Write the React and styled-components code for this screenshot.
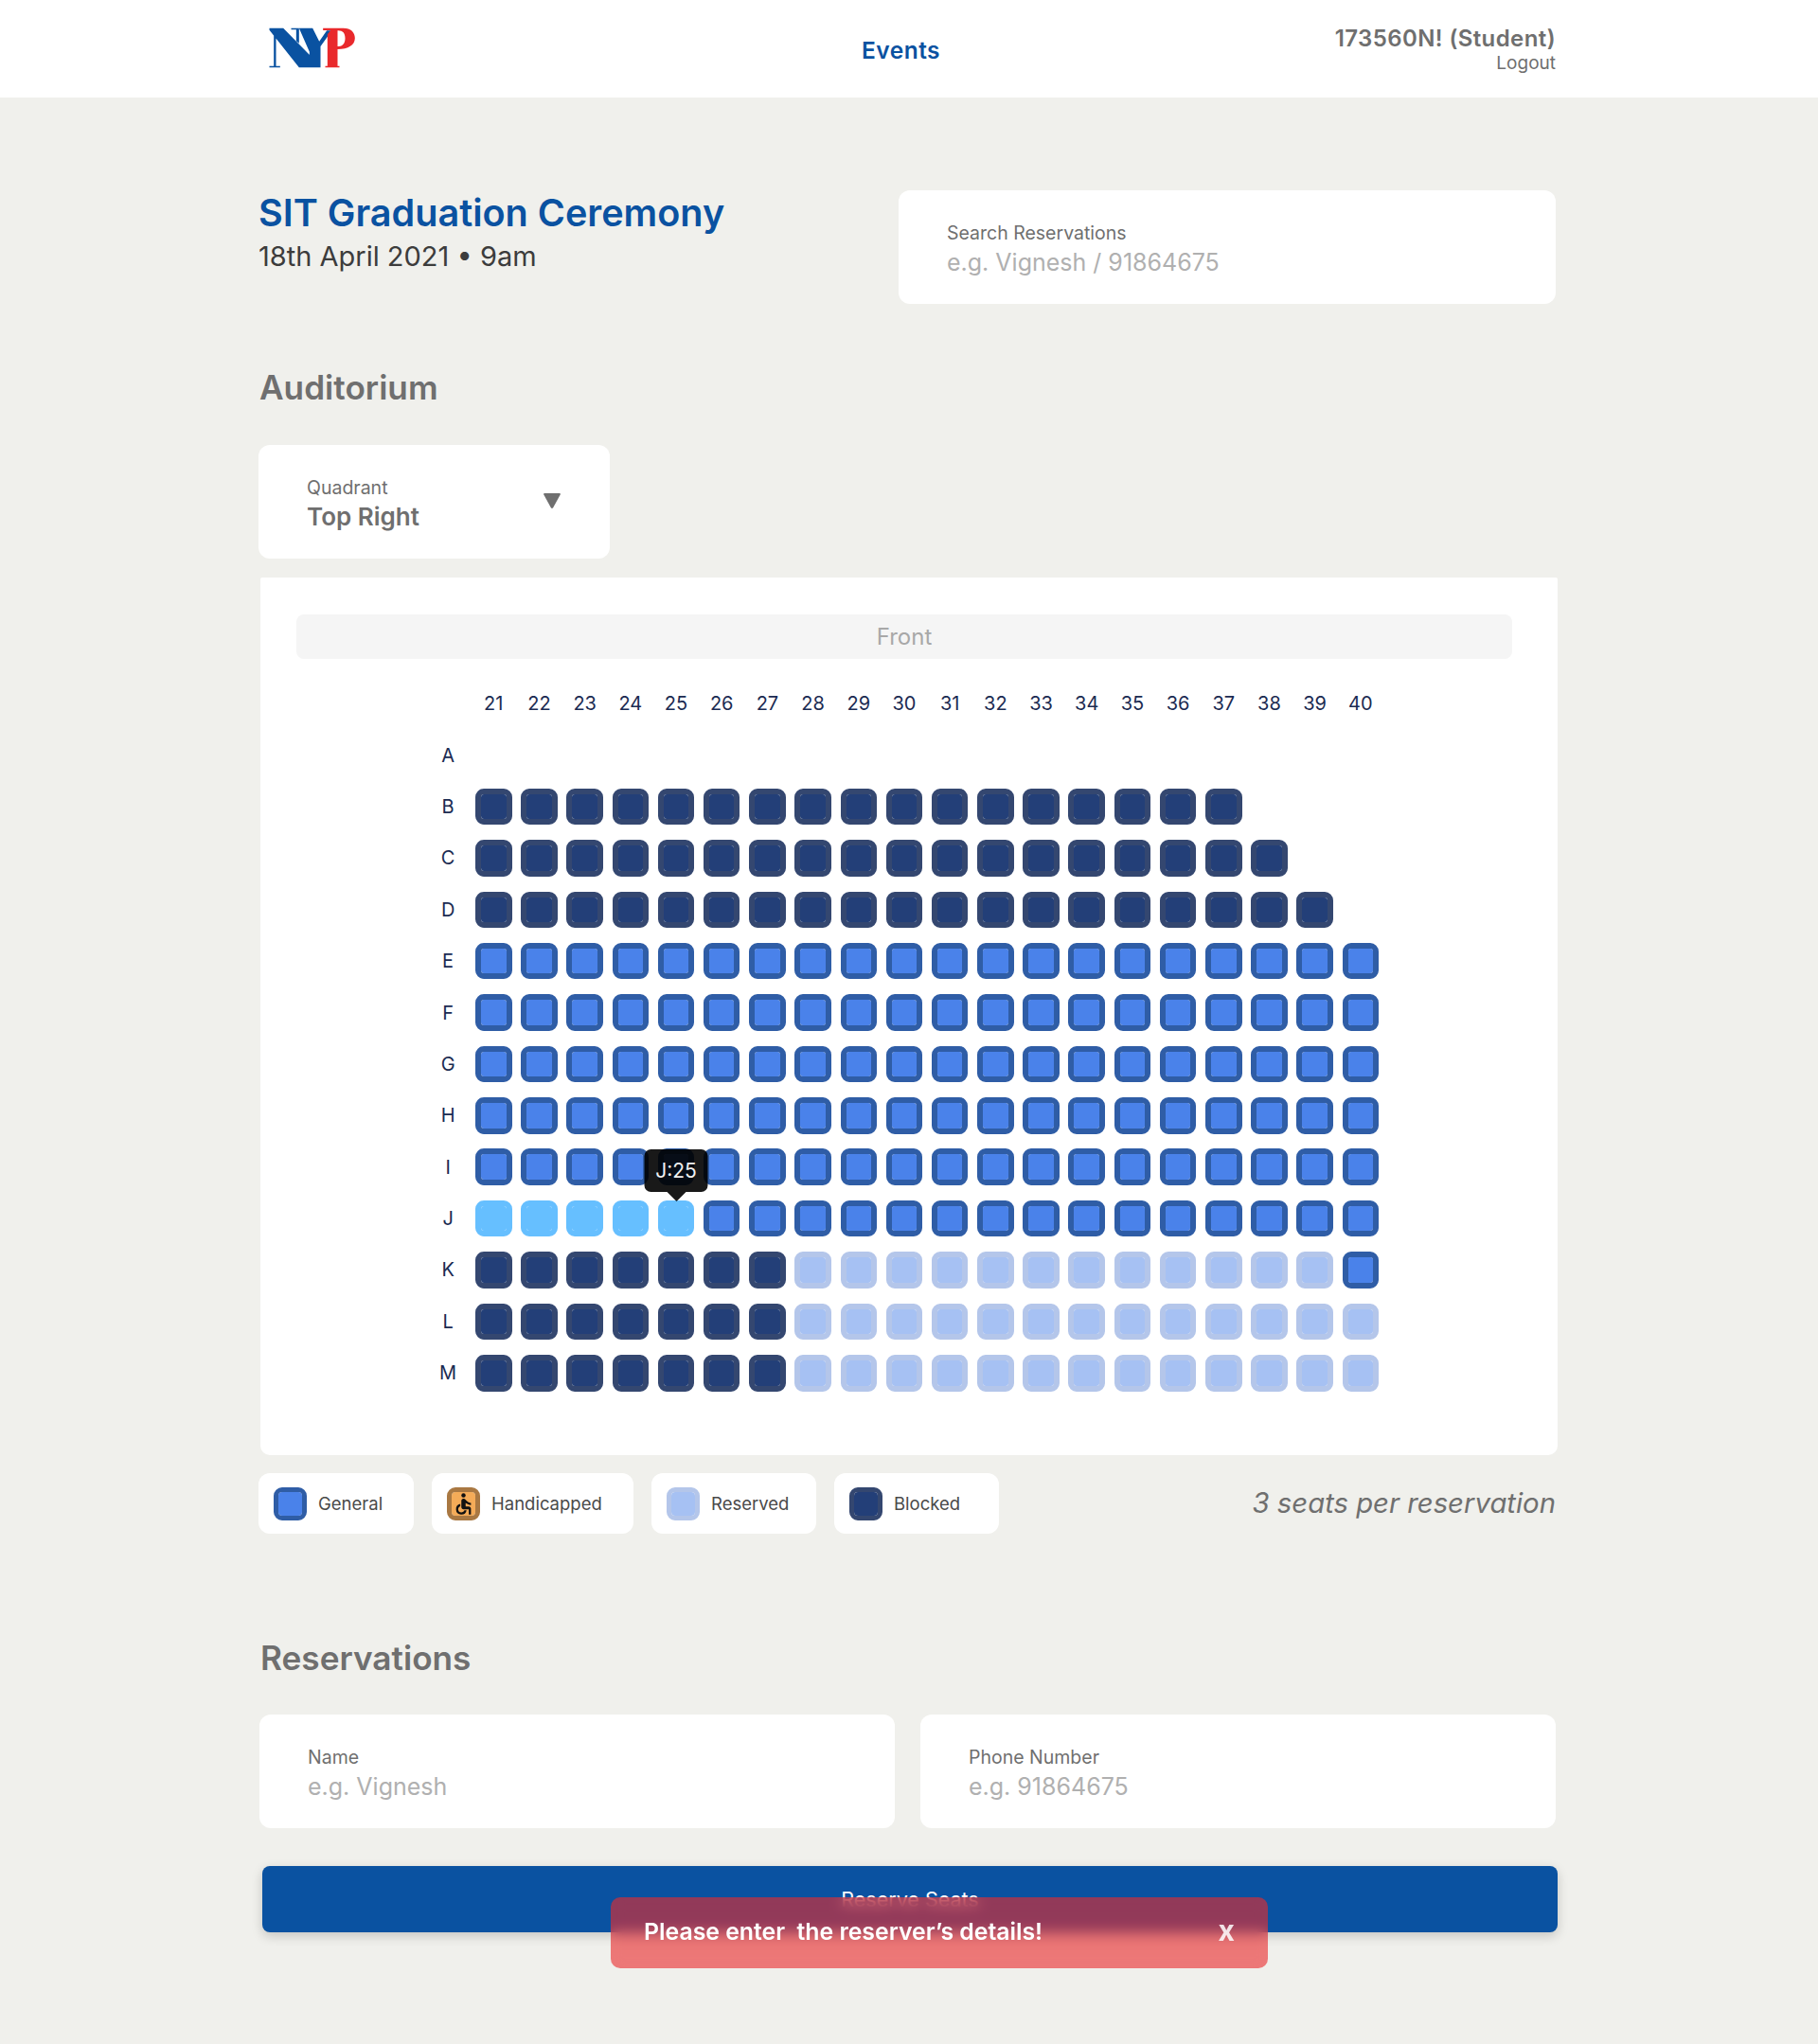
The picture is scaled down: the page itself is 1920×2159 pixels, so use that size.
import React from "react";
import styled, { createGlobalStyle } from "styled-components";
import { MdAccessible } from "react-icons/md";

const Global = createGlobalStyle`
  html, body { margin: 0; padding: 0; background: #f0f0ec; }
  body { font-family: Inter, "Open Sans", "Liberation Sans", sans-serif; }
  * { box-sizing: border-box; }
`;

const Page = styled.div`
  position: relative;
  width: 1920px;
  height: 2159px;
  background: #f0f0ec;
  overflow: hidden;
`;

const Header = styled.header`
  height: 103px;
  background: #fff;
  padding: 0 277px 0 284px;
  display: grid;
  grid-template-columns: 1fr auto 1fr;
  align-items: center;
`;

const Logo = styled.svg`
  width: 92px;
  height: 44px;
  display: block;
  margin-top: -2px;
`;

const NavLink = styled.a`
  color: #0a52a1;
  font-size: 24.5px;
  letter-spacing: 0.5px;
  font-weight: 600;
  margin: 3px 24px 0 0;
`;

const User = styled.div`
  justify-self: end;
  text-align: right;
  color: #6f6f6f;
  margin-top: 1px;
`;

const UserName = styled.div`
  font-size: 24px;
  letter-spacing: 0.4px;
  font-weight: 600;
  line-height: 29px;
`;

const Logout = styled.div`
  font-size: 19px;
  line-height: 24px;
`;

const Main = styled.main`
  width: 1372px;
  margin-left: 273px;
`;

const TopRow = styled.section`
  margin-top: 98px;
  display: flex;
  justify-content: space-between;
  padding-right: 2px;
`;

const Title = styled.h1`
  margin: 0;
  font-size: 39.6px;
  line-height: 48px;
  font-weight: 600;
  color: #0a52a1;
`;

const DateLine = styled.div`
  margin-top: 2px;
  font-size: 29px;
  line-height: 40px;
  color: #3c3c3c;
`;

const Card = styled.div`
  width: ${(p) => p.$width}px;
  height: 120px;
  background: #fff;
  border-radius: 12px;
  padding: 33px 0 0 51px;
`;

const FieldLabel = styled.div`
  font-size: 19.5px;
  line-height: 24px;
  color: #6f6f6f;
`;

const Placeholder = styled.div`
  font-size: 25px;
  line-height: 32px;
  margin-top: 3px;
  color: #b0b0b0;
`;

const SectionTitle = styled.h2`
  margin: ${(p) => p.$top}px 0 0 ${(p) => p.$left}px;
  font-size: 35.2px;
  line-height: 44px;
  font-weight: 600;
  color: #6f6f6f;
`;

const SelectCard = styled(Card)`
  margin-top: 39px;
  display: flex;
  justify-content: space-between;
  padding: 33px 51px 0 51px;
`;

const SelectValue = styled.div`
  font-size: 26px;
  line-height: 32px;
  margin-top: 3px;
  font-weight: 600;
  color: #6f6f6f;
`;

const Caret = styled.svg`
  width: 20px;
  height: 18px;
  margin-top: 17px;
  fill: #6f6f6f;
`;

const Panel = styled.section`
  margin: 20px 0 0 2px;
  width: 1370px;
  height: 927px;
  background: #fff;
  border-radius: 2px 2px 10px 10px;
  padding: 39px 48px 0 38px;
`;

const Front = styled.div`
  height: 47px;
  line-height: 47px;
  border-radius: 8px;
  background: #f5f5f5;
  text-align: center;
  font-size: 24px;
  color: #a8a8a8;
`;

const SeatGrid = styled.div`
  margin: 20px 0 0 136px;
  display: grid;
  grid-template-columns: repeat(21, 48.2px);
  grid-auto-rows: 54.4px;
  color: #1b2b52;
  font-size: 20px;
`;

const Label = styled.div`
  display: flex;
  align-items: center;
  justify-content: center;
`;

const SeatCell = styled.div`
  display: flex;
  align-items: center;
  justify-content: center;
`;

const seatColors = {
  general: ["#4a82ea", "#2f5da6"],
  blocked: ["#233f78", "#344770"],
  reserved: ["#a6c1f3", "#b4c6ea"],
  selected: ["#66bfff", "#66bfff"],
  handicapped: ["#f4ab58", "#a97842"],
};

const Seat = styled.div`
  position: relative;
  width: 38.5px;
  height: 38.5px;
  border-radius: 9px;
  background: ${(p) => seatColors[p.$kind][0]};
  background-clip: padding-box;
  border: 6px solid ${(p) => seatColors[p.$kind][1]};
`;

const Tooltip = styled.div`
  position: absolute;
  left: 50%;
  bottom: 100%;
  z-index: 2;
  margin: 0 0 15px;
  transform: translateX(-50%);
  width: 67px;
  height: 45px;
  border-radius: 7px;
  background: rgba(0, 0, 0, 0.9);
  color: #f0f0f0;
  font-size: 21px;
  line-height: 45px;
  text-align: center;
  &::after {
    content: "";
    position: absolute;
    left: 50%;
    top: 100%;
    margin-left: -10px;
    border: 10px solid transparent;
    border-bottom: 0;
    border-top-color: rgba(0, 0, 0, 0.9);
  }
`;

const LegendRow = styled.div`
  margin-top: 19px;
  display: flex;
  align-items: center;
  gap: 19px;
  padding-right: 2px;
`;

const LegendItem = styled.div`
  width: ${(p) => p.$width}px;
  height: 64px;
  background: #fff;
  border-radius: 12px;
  display: flex;
  align-items: center;
  gap: 12px;
  padding-left: 16px;
  font-size: 18.5px;
  color: #4a4a4a;
`;

const LegendSeat = styled(Seat)`
  width: 35px;
  height: 35px;
  flex: none;
  border-width: 5px;
  display: flex;
  align-items: center;
  justify-content: center;
  color: #111;
  & > svg { width: 27px; height: 27px; flex: none; }
`;

const Note = styled.div`
  margin: 0 0 2px auto;
  font-size: 29.3px;
  font-style: italic;
  color: #6f6f6f;
`;

const Fields = styled.div`
  margin: 38px 0 0 1px;
  display: flex;
  justify-content: space-between;
  padding-right: 2px;
`;

const Submit = styled.button`
  display: block;
  margin: 40px 0 0 4px;
  width: 1368px;
  height: 70px;
  padding: 0;
  border: 0;
  border-radius: 8px;
  background: #0a52a1;
  color: #fff;
  font: 21.5px Inter, sans-serif;
  box-shadow: 0 4px 12px rgba(0, 0, 0, 0.18);
`;

const Toast = styled.div`
  position: absolute;
  left: 645px;
  top: 2004px;
  width: 694px;
  height: 75px;
  border-radius: 10px;
  background: rgba(233, 42, 44, 0.61);
  backdrop-filter: blur(7px);
  display: flex;
  align-items: center;
  justify-content: space-between;
  padding: 0 35px 3px 35px;
  color: #fff;
  font-size: 24.8px;
  font-weight: 600;
`;

const ToastClose = styled.span`
  margin-bottom: 3px;
  font-size: 30px;
  font-weight: 700;
  opacity: 0.85;
`;

const columns = Array.from({ length: 20 }, (_, i) => 21 + i);

const rows = [
  ["A", []],
  ["B", [["blocked", 17]]],
  ["C", [["blocked", 18]]],
  ["D", [["blocked", 19]]],
  ["E", [["general", 20]]],
  ["F", [["general", 20]]],
  ["G", [["general", 20]]],
  ["H", [["general", 20]]],
  ["I", [["general", 20]]],
  ["J", [["selected", 5], ["general", 15]]],
  ["K", [["blocked", 7], ["reserved", 12], ["general", 1]]],
  ["L", [["blocked", 7], ["reserved", 13]]],
  ["M", [["blocked", 7], ["reserved", 13]]],
];

const expand = (spec) => spec.flatMap(([kind, n]) => Array(n).fill(kind));

const NypLogo = () => (
  <Logo viewBox="27 28 275 132" aria-label="NYP">
    <path
      fill="#0a52a1"
      d="M42 35H49V150H62V155H28V150H42Z M28 30H72L190 150V155H122L28 36Z M113 35H97V30H122V78L113 71Z M122 30H165L186 72L210 38H226L190 88V155H155V105Z"
    />
    <path
      fill="#e9292c"
      fillRule="evenodd"
      d="M198 30H262C287 30 299 44 299 62C299 84 278 97 244 97V150H250V155H205V150H212V50L222 37H198ZM244 38V88C262 90 268 76 268 62C268 46 260 37 244 38Z"
    />
  </Logo>
);

export default function App() {
  return (
    <Page>
      <Global />
      <Header>
        <NypLogo />
        <NavLink>Events</NavLink>
        <User>
          <UserName>173560N! (Student)</UserName>
          <Logout>Logout</Logout>
        </User>
      </Header>
      <Main>
        <TopRow>
          <div>
            <Title>SIT Graduation Ceremony</Title>
            <DateLine>18th April 2021 • 9am</DateLine>
          </div>
          <Card $width={694}>
            <FieldLabel>Search Reservations</FieldLabel>
            <Placeholder>e.g. Vignesh / 91864675</Placeholder>
          </Card>
        </TopRow>

        <SectionTitle $top={66} $left={1}>Auditorium</SectionTitle>
        <SelectCard $width={371}>
          <div>
            <FieldLabel>Quadrant</FieldLabel>
            <SelectValue>Top Right</SelectValue>
          </div>
          <Caret viewBox="0 0 20 18">
            <path d="M2 1H18Q19.500 1 18.700 2.500L11.300 16Q10 18 8.700 16L1.300 2.500Q.5 1 2 1Z" />
          </Caret>
        </SelectCard>

        <Panel>
          <Front>Front</Front>
          <SeatGrid>
            <span />
            {columns.map((c) => (
              <Label key={c}>{c}</Label>
            ))}
            {rows.map(([name, spec]) => {
              const seats = expand(spec);
              return (
                <React.Fragment key={name}>
                  <Label>{name}</Label>
                  {columns.map((c, i) => (
                    <SeatCell key={c}>
                      {seats[i] && (
                        <Seat $kind={seats[i]}>
                          {name === "J" && c === 25 && <Tooltip>J:25</Tooltip>}
                        </Seat>
                      )}
                    </SeatCell>
                  ))}
                </React.Fragment>
              );
            })}
          </SeatGrid>
        </Panel>

        <LegendRow>
          <LegendItem $width={164}>
            <LegendSeat $kind="general" />
            General
          </LegendItem>
          <LegendItem $width={213}>
            <LegendSeat $kind="handicapped">
              <MdAccessible />
            </LegendSeat>
            Handicapped
          </LegendItem>
          <LegendItem $width={174}>
            <LegendSeat $kind="reserved" />
            Reserved
          </LegendItem>
          <LegendItem $width={174}>
            <LegendSeat $kind="blocked" />
            Blocked
          </LegendItem>
          <Note>3 seats per reservation</Note>
        </LegendRow>

        <SectionTitle $top={109} $left={2}>Reservations</SectionTitle>
        <Fields>
          <Card $width={671}>
            <FieldLabel>Name</FieldLabel>
            <Placeholder>e.g. Vignesh</Placeholder>
          </Card>
          <Card $width={671}>
            <FieldLabel>Phone Number</FieldLabel>
            <Placeholder>e.g. 91864675</Placeholder>
          </Card>
        </Fields>
        <Submit>Reserve Seats</Submit>
      </Main>
      <Toast>
        <span>Please enter &nbsp;the reserver’s details!</span>
        <ToastClose>x</ToastClose>
      </Toast>
    </Page>
  );
}
